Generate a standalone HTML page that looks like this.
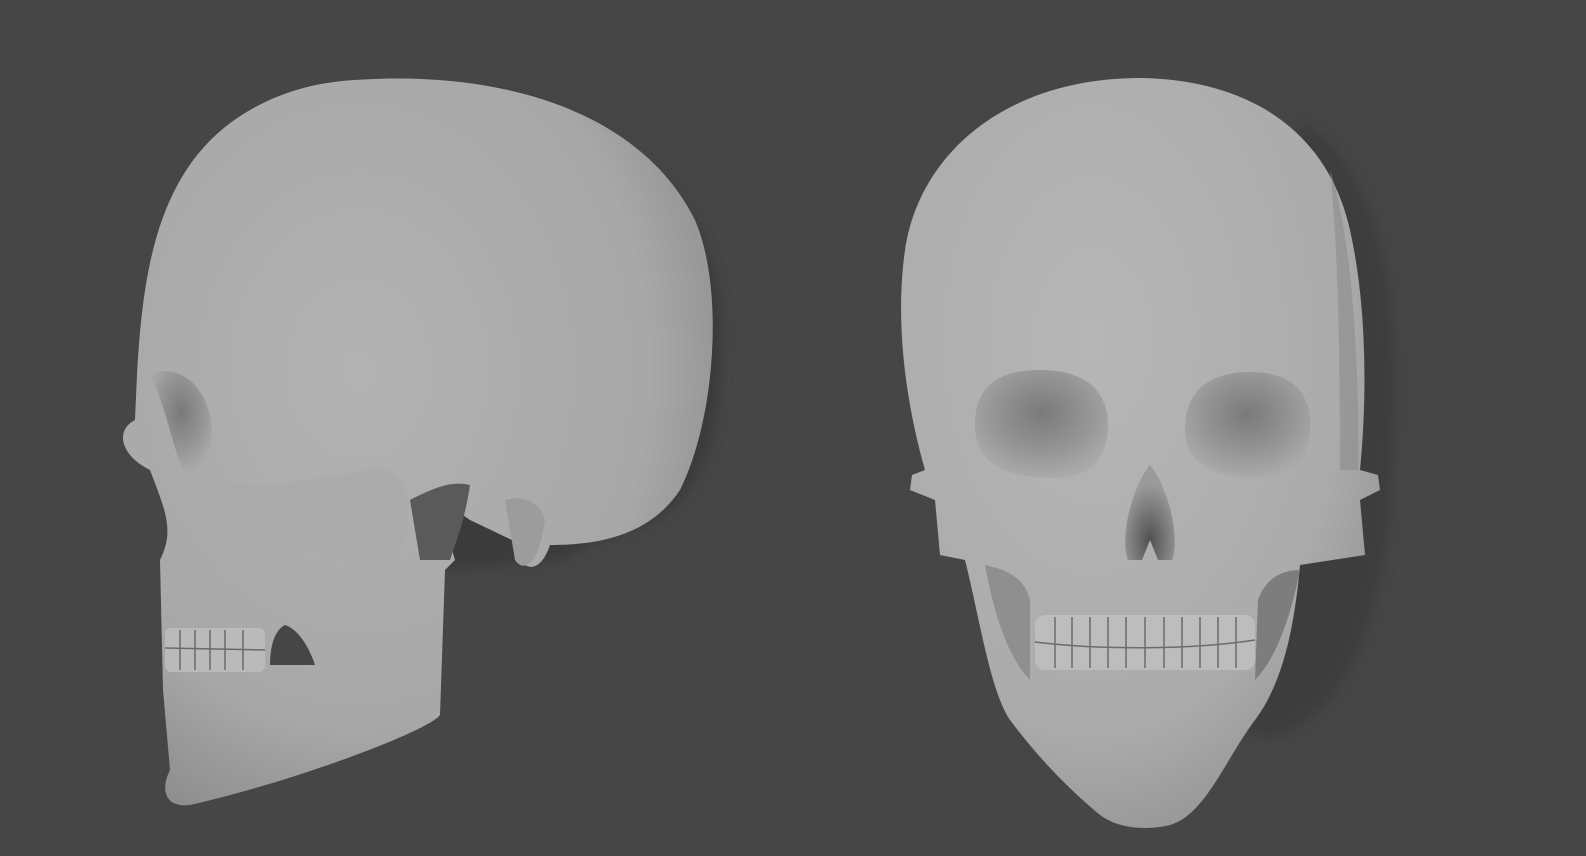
<!DOCTYPE html>
<html><head><meta charset="utf-8"><style>
html,body{margin:0;padding:0;background:#464646;width:1586px;height:856px;overflow:hidden}
</style></head><body>
<svg width="1586" height="856" viewBox="0 0 1586 856" xmlns="http://www.w3.org/2000/svg">
<defs>
<radialGradient id="gL" cx="0.4" cy="0.4" r="0.7">
<stop offset="0" stop-color="#b2b2b2"/><stop offset="0.7" stop-color="#a8a8a8"/><stop offset="1" stop-color="#8a8a8a"/>
</radialGradient>
<radialGradient id="gR" cx="0.4" cy="0.35" r="0.75">
<stop offset="0" stop-color="#b6b6b6"/><stop offset="0.7" stop-color="#ababab"/><stop offset="1" stop-color="#8e8e8e"/>
</radialGradient>
<radialGradient id="eye" cx="0.5" cy="0.4" r="0.6">
<stop offset="0" stop-color="#7a7a7a"/><stop offset="0.6" stop-color="#959595"/><stop offset="1" stop-color="#aaaaaa"/>
</radialGradient>
<radialGradient id="nose" cx="0.5" cy="0.8" r="0.6">
<stop offset="0" stop-color="#505050"/><stop offset="1" stop-color="#9a9a9a"/>
</radialGradient>
<filter id="bl"><feGaussianBlur stdDeviation="6"/></filter>
</defs>
<rect width="1586" height="856" fill="#464646"/>

<!-- LEFT SKULL -->
<path d="M470,95 C620,110 725,200 722,340 C720,470 690,520 600,540 L560,560 L440,570 Z" fill="#3a3a3a" filter="url(#bl)"/>
<path d="M355,80 C500,70 640,110 695,220 C725,290 715,420 680,490 C650,535 600,545 550,545 C540,575 520,575 512,540 L470,520 C440,500 430,470 455,560 L445,570 L440,715 C430,730 300,780 190,805 C165,808 160,790 170,770 L163,690 L160,560 C175,530 165,510 150,470 C120,455 115,430 135,420 C140,300 145,170 250,110 C285,90 320,82 355,80 Z" fill="url(#gL)"/>
<path d="M150,375 C180,360 210,390 212,430 C212,460 200,478 185,472 C172,450 168,410 150,375Z" fill="url(#eye)"/>
<!-- zygomatic -->
<path d="M195,470 C240,500 330,475 380,468 C405,470 415,500 405,540 C395,570 370,570 345,560 C300,545 230,545 190,530Z" fill="#ababab"/>
<path d="M410,500 C430,490 450,480 470,485 C465,520 455,545 450,560 L420,560 Z" fill="#5a5a5a"/>
<path d="M505,500 C520,495 540,500 545,520 C540,560 525,575 515,560 Z" fill="#9c9c9c"/>
<!-- jaw shadow hole -->
<path d="M285,625 C300,630 310,650 315,665 L270,665 C270,645 275,630 285,625Z" fill="#464646"/>
<!-- teeth -->
<rect x="165" y="628" width="100" height="44" rx="6" fill="#bababa"/>
<g stroke="#6a6a6a" stroke-width="1.5">
<line x1="165" y1="648" x2="265" y2="650"/>
<line x1="180" y1="630" x2="180" y2="670"/><line x1="195" y1="630" x2="195" y2="670"/>
<line x1="210" y1="630" x2="210" y2="670"/><line x1="225" y1="630" x2="225" y2="670"/><line x1="243" y1="630" x2="243" y2="670"/>
</g>

<!-- RIGHT SKULL -->
<path d="M1300,120 C1370,160 1395,260 1395,380 C1395,500 1390,620 1330,700 C1290,740 1250,760 1230,700 Z" fill="#3d3d3d" filter="url(#bl)"/>
<path d="M1140,78 C1260,80 1330,140 1350,230 C1370,320 1365,420 1360,470 L1378,475 L1380,490 L1360,500 L1365,555 L1300,565 C1295,620 1285,680 1255,720 C1225,760 1205,815 1170,825 C1150,830 1120,830 1100,815 C1070,790 1040,760 1010,720 C990,690 980,620 965,560 L940,555 L935,500 L910,490 L912,475 L925,470 C905,400 895,320 905,250 C920,150 1010,78 1140,78 Z" fill="url(#gR)"/>
<path d="M1330,170 C1350,230 1360,350 1358,470 L1340,470 C1340,350 1338,250 1330,170Z" fill="#8c8c8c" opacity="0.6"/>
<path d="M975,425 C975,385 1000,370 1040,370 C1090,370 1110,395 1108,430 C1105,465 1085,480 1045,478 C1000,476 975,460 975,425Z" fill="url(#eye)"/>
<path d="M1185,430 C1185,390 1210,372 1250,372 C1295,372 1312,395 1310,430 C1308,465 1290,478 1255,478 C1215,478 1185,465 1185,430Z" fill="url(#eye)"/>
<path d="M1150,465 C1170,490 1180,540 1172,560 L1158,560 L1150,540 L1142,560 L1128,560 C1120,540 1130,490 1150,465Z" fill="url(#nose)"/>
<!-- teeth -->
<rect x="1035" y="615" width="220" height="55" rx="10" fill="#bdbdbd"/>
<g stroke="#6c6c6c" stroke-width="1.5">
<path d="M1035,642 C1100,650 1190,650 1255,640" fill="none"/>
<line x1="1055" y1="617" x2="1055" y2="668"/><line x1="1072" y1="617" x2="1072" y2="668"/><line x1="1090" y1="617" x2="1090" y2="668"/>
<line x1="1108" y1="617" x2="1108" y2="668"/><line x1="1126" y1="617" x2="1126" y2="668"/><line x1="1145" y1="617" x2="1145" y2="668"/>
<line x1="1164" y1="617" x2="1164" y2="668"/><line x1="1182" y1="617" x2="1182" y2="668"/><line x1="1200" y1="617" x2="1200" y2="668"/>
<line x1="1218" y1="617" x2="1218" y2="668"/><line x1="1236" y1="617" x2="1236" y2="668"/>
</g>
<!-- jaw gaps -->
<path d="M985,565 C995,620 1010,660 1030,680 L1030,600 C1025,580 1010,570 985,565Z" fill="#8f8f8f"/>
<path d="M1300,570 C1290,620 1275,660 1255,680 L1258,600 C1265,580 1280,570 1300,570Z" fill="#7d7d7d"/>
</svg>
</body></html>
